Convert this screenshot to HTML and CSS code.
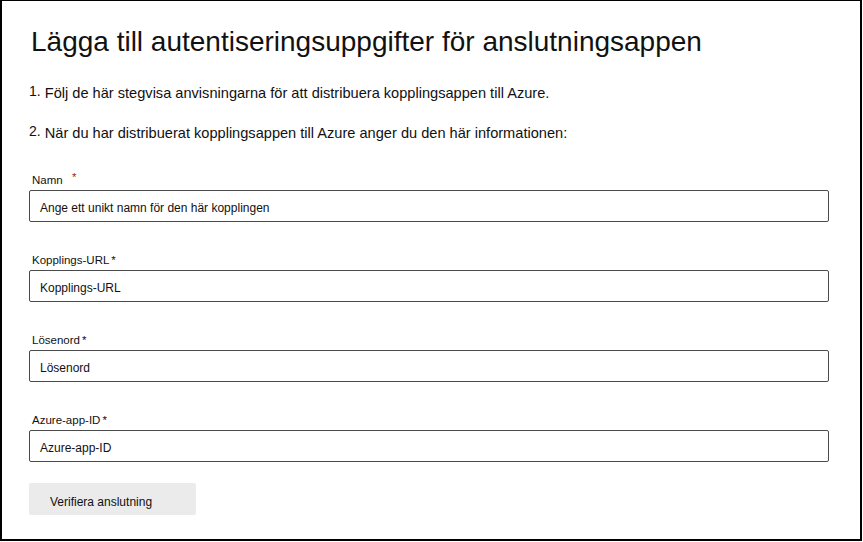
FILE: index.html
```html
<!DOCTYPE html>
<html lang="sv">
<head>
<meta charset="utf-8">
<link rel="stylesheet" href="styles.css">
</head>
<body>
<div class="frame">
  <h1 class="title">Lägga till autentiseringsuppgifter för anslutningsappen</h1>
  <p class="step step1"><span class="num">1.</span> Följ de här stegvisa anvisningarna för att distribuera kopplingsappen till Azure.</p>
  <p class="step step2"><span class="num">2.</span> När du har distribuerat kopplingsappen till Azure anger du den här informationen:</p>
  <div class="field f1">
    <div class="label">Namn <span class="req red">*</span></div>
    <div class="input">Ange ett unikt namn för den här kopplingen</div>
  </div>
  <div class="field">
    <div class="label">Kopplings-URL<span class="req">*</span></div>
    <div class="input">Kopplings-URL</div>
  </div>
  <div class="field">
    <div class="label">Lösenord<span class="req">*</span></div>
    <div class="input">Lösenord</div>
  </div>
  <div class="field">
    <div class="label">Azure-app-ID<span class="req">*</span></div>
    <div class="input">Azure-app-ID</div>
  </div>
  <div class="button">Verifiera anslutning</div>
</div>
</body>
</html>
```
FILE: styles.css
```css
html, body { margin: 0; padding: 0; background: #fff; }
body { font-family: "Liberation Sans", Arial, sans-serif; color: #111; }
.frame {
  box-sizing: border-box;
  width: 862px;
  height: 541px;
  border: 2px solid #000;
  border-top-width: 1px;
  padding: 0 0 0 27px;
}
.title {
  margin: 24px 0 0 2px;
  font-size: 28px;
  font-weight: normal;
  line-height: 34px;
}
.step {
  margin: 0;
  font-size: 14.6px;
  line-height: 18px;
}
.step1 { margin-top: 25px; }
.step2 { margin-top: 22px; }
.num { font-size: 14px; position: relative; top: -2px; }
.field { width: 800px; margin-top: 31px; }
.f1 { margin-top: 31px; }
.label { font-size: 11.5px; line-height: 14px; margin-left: 3px; margin-bottom: 3px; }
.req { margin-left: 2px; }
.red { color: #a4262c; margin-left: 6px; position: relative; top: -3px; }
.input {
  box-sizing: border-box;
  height: 32px;
  border: 1px solid #4a4a4a;
  border-radius: 2px;
  font-size: 12px;
  line-height: 26px;
  padding: 4px 0 0 10px;
}
.button {
  margin-top: 21px;
  width: 167px;
  height: 32px;
  background: #ebebeb;
  border-radius: 2px;
  font-size: 12px;
  line-height: 38px;
  padding-left: 21px;
  box-sizing: border-box;
}
```
